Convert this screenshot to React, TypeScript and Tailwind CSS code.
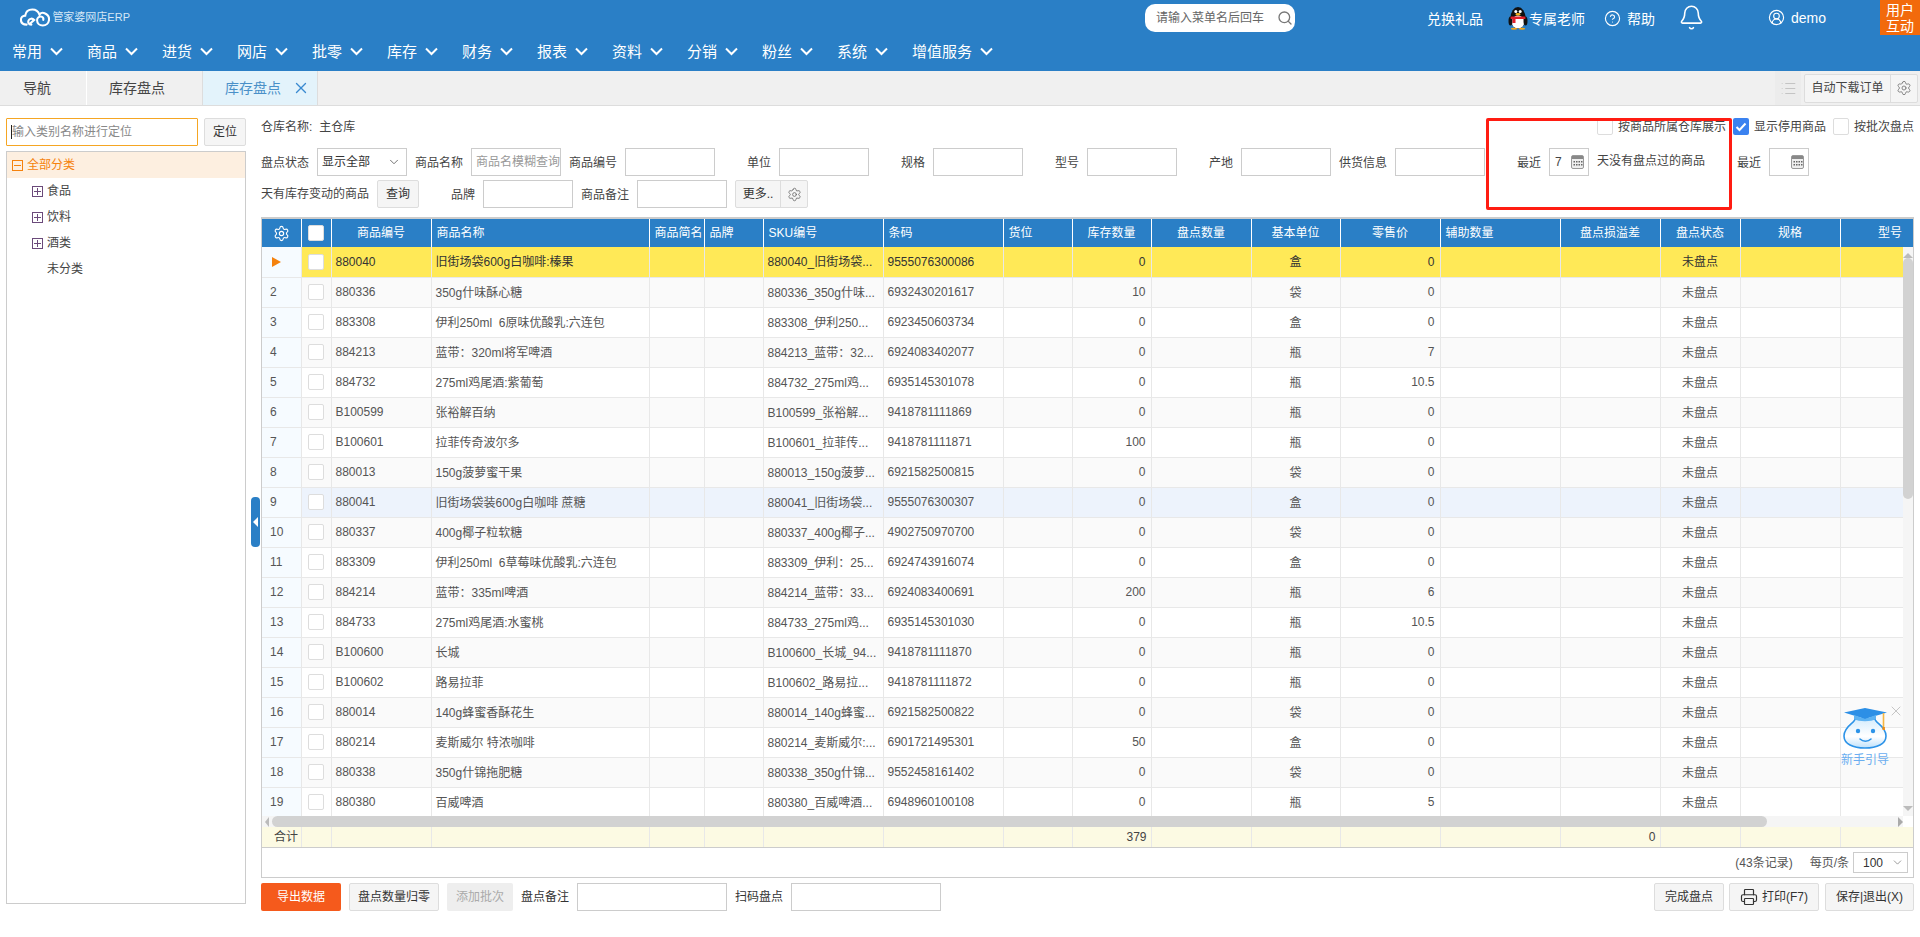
import { Bell, ChevronDown, CircleHelp, CircleUserRound, List, Printer, Search, Settings, X } from 'lucide-react';

const menus = ['常用', '商品', '进货', '网店', '批零', '库存', '财务', '报表', '资料', '分销', '粉丝', '系统', '增值服务'];

// column widths, same for header, body and footer
const widths = [39, 30, 100, 218, 55, 59, 120, 120, 69, 79, 100, 89, 100, 120, 100, 80, 100, 100];

const headers: { label: string; left?: boolean }[] = [
  { label: '商品编号' },
  { label: '商品名称', left: true },
  { label: '商品简名', left: true },
  { label: '品牌', left: true },
  { label: 'SKU编号', left: true },
  { label: '条码', left: true },
  { label: '货位', left: true },
  { label: '库存数量' },
  { label: '盘点数量' },
  { label: '基本单位' },
  { label: '零售价' },
  { label: '辅助数量', left: true },
  { label: '盘点损溢差' },
  { label: '盘点状态' },
  { label: '规格' },
  { label: '型号' },
];

type Row = [string, string, string, string, string, string, string];

const rows: Row[] = [
  ['880040', '旧街场袋600g白咖啡:榛果', '880040_旧街场袋...', '9555076300086', '0', '盒', '0'],
  ['880336', '350g什味酥心糖', '880336_350g什味...', '6932430201617', '10', '袋', '0'],
  ['883308', '伊利250ml  6原味优酸乳:六连包', '883308_伊利250...', '6923450603734', '0', '盒', '0'],
  ['884213', '蓝带：320ml将军啤酒', '884213_蓝带：32...', '6924083402077', '0', '瓶', '7'],
  ['884732', '275ml鸡尾酒:紫葡萄', '884732_275ml鸡...', '6935145301078', '0', '瓶', '10.5'],
  ['B100599', '张裕解百纳', 'B100599_张裕解...', '9418781111869', '0', '瓶', '0'],
  ['B100601', '拉菲传奇波尔多', 'B100601_拉菲传...', '9418781111871', '100', '瓶', '0'],
  ['880013', '150g菠萝蜜干果', '880013_150g菠萝...', '6921582500815', '0', '袋', '0'],
  ['880041', '旧街场袋装600g白咖啡 蔗糖', '880041_旧街场袋...', '9555076300307', '0', '盒', '0'],
  ['880337', '400g椰子粒软糖', '880337_400g椰子...', '4902750970700', '0', '袋', '0'],
  ['883309', '伊利250ml  6草莓味优酸乳:六连包', '883309_伊利：25...', '6924743916074', '0', '盒', '0'],
  ['884214', '蓝带：335ml啤酒', '884214_蓝带：33...', '6924083400691', '200', '瓶', '6'],
  ['884733', '275ml鸡尾酒:水蜜桃', '884733_275ml鸡...', '6935145301030', '0', '瓶', '10.5'],
  ['B100600', '长城', 'B100600_长城_94...', '9418781111870', '0', '瓶', '0'],
  ['B100602', '路易拉菲', 'B100602_路易拉...', '9418781111872', '0', '瓶', '0'],
  ['880014', '140g蜂蜜香酥花生', '880014_140g蜂蜜...', '6921582500822', '0', '袋', '0'],
  ['880214', '麦斯威尔 特浓咖啡', '880214_麦斯威尔:...', '6901721495301', '50', '盒', '0'],
  ['880338', '350g什锦拖肥糖', '880338_350g什锦...', '9552458161402', '0', '袋', '0'],
  ['880380', '百威啤酒', '880380_百威啤酒...', '6948960100108', '0', '瓶', '5'],
];

const Cols = () => (
  <colgroup>
    {widths.map((w, i) => (
      <col key={i} style={{ width: w }} />
    ))}
  </colgroup>
);

const Chevron = () => (
  <svg width="13" height="9" viewBox="0 0 13 9" fill="none" stroke="white" strokeWidth="2" className="ml-2 shrink-0">
    <polyline points="1,1.5 6.5,7 12,1.5" />
  </svg>
);

const CloudLogo = () => (
  <svg width="32" height="19" viewBox="0 0 32 19" fill="none" stroke="white" strokeWidth="2.2" strokeLinecap="round">
    <path d="M7 17 C2.5 17 1 14.5 1 12 C1 9.5 3 7.5 5.5 7.5 C6 3.5 9 1 13 1 C17 1 19.5 3.5 20.5 6.5 C22 4.5 24 4 26 5 C29.5 6.5 31 9.5 30.5 12.5 C30 15.5 27.5 18 24 18 C20.5 18 18 15.5 18 12.5 C18 10 20 8.5 22 8.5 C24 8.5 25 10.5 24.5 12" />
    <path d="M12 17 C9 17 8 14.5 9 12.5 C10 10.5 13 10 15 12 L11 15.5" />
  </svg>
);

const Penguin = () => (
  <svg width="20" height="24" viewBox="0 0 20 24">
    <ellipse cx="10" cy="12" rx="7.5" ry="11" fill="#111" />
    <ellipse cx="10" cy="16" rx="6.5" ry="6.5" fill="#fff" />
    <ellipse cx="2.5" cy="15" rx="2" ry="4.5" fill="#111" />
    <ellipse cx="17.5" cy="15" rx="2" ry="4.5" fill="#111" />
    <rect x="2.5" y="10.5" width="15" height="2.6" rx="1.2" fill="#e0202a" />
    <rect x="4.5" y="12" width="3" height="5" fill="#e0202a" />
    <circle cx="7.8" cy="5.6" r="1.5" fill="#fff" />
    <circle cx="12.2" cy="5.6" r="1.5" fill="#fff" />
    <ellipse cx="10" cy="8.3" rx="2.6" ry="1.2" fill="#f6b21a" />
    <ellipse cx="6" cy="22.8" rx="3.2" ry="1" fill="#f6a81a" />
    <ellipse cx="14" cy="22.8" rx="3.2" ry="1" fill="#f6a81a" />
  </svg>
);

const CalendarIcon = () => (
  <svg width="13" height="14" viewBox="0 0 13 14">
    <rect x="0.5" y="0.5" width="12" height="13" rx="1.5" fill="#eee" stroke="#999" />
    <rect x="1" y="1" width="11" height="3" fill="#888" />
    <g fill="#666">
      <rect x="2.5" y="6" width="1.5" height="1.5" />
      <rect x="5" y="6" width="1.5" height="1.5" />
      <rect x="7.5" y="6" width="1.5" height="1.5" />
      <rect x="10" y="6" width="1.5" height="1.5" />
      <rect x="2.5" y="9" width="1.5" height="1.5" />
      <rect x="5" y="9" width="1.5" height="1.5" />
      <rect x="7.5" y="9" width="1.5" height="1.5" />
      <rect x="10" y="9" width="1.5" height="1.5" />
    </g>
  </svg>
);

const GuideFace = () => (
  <svg width="48" height="44" viewBox="0 0 48 44">
    <defs>
      <linearGradient id="faceFill" x1="0" y1="0" x2="0" y2="1">
        <stop offset="0" stopColor="#d6edfd" />
        <stop offset="0.6" stopColor="#ffffff" />
        <stop offset="1" stopColor="#bfe2fb" />
      </linearGradient>
    </defs>
    <path d="M14 13 C14 17 3 20 3 30 C3 38 12 42 24 42 C36 42 45 38 45 30 C45 20 34 17 34 13 Z" fill="url(#faceFill)" stroke="#2c93e8" strokeWidth="1.6" />
    <path d="M3 6.5 L24 2 L46 6.5 L24 13 Z" fill="#2c8fe6" />
    <path d="M13 9 L13 13 C18 16 30 16 35 13 L35 9 L24 13 Z" fill="#5db2f2" />
    <path d="M42.5 7 L42.5 22" stroke="#f5b642" strokeWidth="1.6" />
    <rect x="41.5" y="21" width="2.4" height="3" fill="#f08c14" />
    <circle cx="17" cy="25" r="2.2" fill="#2c93e8" />
    <circle cx="32" cy="25" r="2.2" fill="#2c93e8" />
    <path d="M19 33 C22 36 27 36 30 33" fill="none" stroke="#2c93e8" strokeWidth="1.6" strokeLinecap="round" />
  </svg>
);

const Check = ({ checked }: { checked?: boolean }) =>
  checked ? (
    <span className="flex h-[17px] w-4 items-center justify-center rounded-[2px] bg-[#3b82f0]">
      <svg width="12" height="10" viewBox="0 0 12 10" fill="none" stroke="white" strokeWidth="2">
        <polyline points="1.5,5 4.5,8 10.5,1.5" />
      </svg>
    </span>
  ) : (
    <span className="block h-[17px] w-4 rounded-[2px] border border-[#ddd] bg-white" />
  );

const Box = () => <span className="mx-auto block h-[16px] w-4 rounded-[2px] border border-[#ddd] bg-white" />;

const TextInput = ({ w, placeholder }: { w: string; placeholder?: string }) => (
  <input
    placeholder={placeholder}
    className={`h-7 ${w} border border-[#ccc] bg-white pl-1 text-xs text-[#333] outline-none placeholder:text-[#999]`}
  />
);

const Field = ({ label, placeholder }: { label: string; placeholder?: string }) => (
  <div className="mr-2 flex items-center">
    <span className="mr-2 w-12 pt-[2px] text-right whitespace-nowrap">{label}</span>
    <TextInput w="w-[90px]" placeholder={placeholder} />
  </div>
);

const DaysInput = ({ value }: { value?: string }) => (
  <div className="flex h-7 w-10 items-center justify-between border border-[#ccc] pr-[4px] pl-[5px]">
    <span>{value}</span>
    <CalendarIcon />
  </div>
);

const TreeRow = ({ label }: { label: string }) => (
  <div className="flex h-[26px] items-center pl-[25px] text-[#444]">
    <span className="mr-[4px] flex h-[11px] w-[11px] items-center justify-center border border-[#6b4a7a]">
      <span className="relative block h-[1px] w-[7px] bg-[#6b4a7a]">
        <span className="absolute top-[-3px] left-[3px] block h-[7px] w-[1px] bg-[#6b4a7a]" />
      </span>
    </span>
    {label}
  </div>
);

const Btn = ({ children, w, className = '' }: { children: React.ReactNode; w: string; className?: string }) => (
  <button className={`flex h-7 ${w} items-center justify-center rounded-[2px] border border-[#ddd] bg-[#f5f5f5] text-xs text-[#333] ${className}`}>
    {children}
  </button>
);

export default function App() {
  return (
    <div className="flex h-[937px] w-[1920px] flex-col overflow-hidden bg-white font-['Liberation_Sans','Noto_Sans_CJK_SC',sans-serif] text-xs text-[#444]">
      {/* top bar */}
      <header className="h-[71px] shrink-0 bg-[#2a7fc6] text-white">
        <div className="flex h-[37px] items-start">
          <div className="mt-[8px] ml-[20px] flex w-[110px] shrink-0 items-center">
            <CloudLogo />
            <span className="ml-[2px] text-[11px] whitespace-nowrap text-[#d5e7f6]">管家婆网店ERP</span>
          </div>
          <div className="mt-[4px] ml-[1015px] flex h-7 w-[150px] shrink-0 items-center justify-between rounded-[10px] bg-white pr-[2px] pl-[11px] text-[#666]">
            请输入菜单名后回车
            <Search size={16} className="text-[#777]" />
          </div>
          <div className="ml-[132px] flex h-[35px] shrink-0 items-center text-sm whitespace-nowrap">
            <span className="mt-[3px]">兑换礼品</span>
            <span className="ml-[25px]">
              <Penguin />
            </span>
            <span className="mt-[3px] ml-[1px]">专属老师</span>
            <CircleHelp size={17} strokeWidth={1.6} className="mt-[2px] ml-[19px] shrink-0" />
            <span className="mt-[3px] ml-[6px]">帮助</span>
            <Bell size={27} strokeWidth={1.4} className="ml-[23px] shrink-0" />
            <CircleUserRound size={17} strokeWidth={1.6} className="ml-[63px] shrink-0" />
            <span className="ml-[6px]">demo</span>
          </div>
          <div className="ml-auto flex h-[35px] w-10 shrink-0 items-center justify-center bg-[#f26a0c] text-center text-sm leading-[16px] text-white">
            用户
            <br />
            互动
          </div>
        </div>
        <nav className="flex h-[30px] items-center pl-3 text-[15px]">
          {menus.map((m) => (
            <div key={m} className={`flex shrink-0 items-center whitespace-nowrap ${m === '增值服务' ? '' : 'w-[75px]'}`}>
              {m}
              <Chevron />
            </div>
          ))}
        </nav>
      </header>

      {/* tabs */}
      <div className="flex h-[35px] shrink-0 border-b border-[#ddd] bg-[#f0f0f0] text-sm">
        <div className="flex w-[87px] items-center border-r border-[#fff] pl-[23px]">导航</div>
        <div className="flex w-[116px] items-center border-r border-[#ddd] pl-[22px]">库存盘点</div>
        <div className="flex w-[115px] items-center border-r border-[#ddd] bg-[#e3f3fb] pl-[22px] text-[#4a90c8]">
          库存盘点
          <X size={18} strokeWidth={1.8} className="ml-[11px] text-[#3a8ad0]" />
        </div>
        <div className="ml-auto flex items-center">
          <div className="flex h-[34px] w-[26px] items-center justify-center bg-[#ececec] text-[#c4c4c4]">
            <List size={17} strokeWidth={1.5} />
          </div>
          <div className="mr-[2px] ml-[3px] flex h-[29px] items-center rounded-[2px] border border-[#ddd] bg-[#f5f5f5] text-xs">
            <span className="flex h-full w-[86px] items-center justify-center border-r border-[#ddd]">自动下载订单</span>
            <span className="flex w-[26px] justify-center text-[#777]">
              <Settings size={16} strokeWidth={1.3} />
            </span>
          </div>
        </div>
      </div>

      <main className="relative flex min-h-0 flex-1">
        {/* category tree */}
        <aside className="relative w-[261px] shrink-0 pt-3 pl-[6px]">
          <div className="flex h-7 w-[240px] justify-between">
            <div className="relative h-7 w-[192px]">
              <input
                placeholder="输入类别名称进行定位"
                className="h-7 w-full rounded-[1px] border border-[#f5a623] pl-[5px] text-xs outline-none placeholder:text-[#888]"
              />
              <span className="absolute top-[7px] left-[5px] h-[14px] w-[1px] bg-[#222]" />
            </div>
            <Btn w="w-[42px]">定位</Btn>
          </div>
          <div className="mt-[5px] h-[753px] w-[240px] border border-[#ccc] bg-white">
            <div className="flex h-[26px] items-center bg-[#fdefe0] pl-[5px] text-[#f5820d]">
              <span className="mr-[4px] flex h-[11px] w-[11px] items-center justify-center border border-[#f5820d]">
                <span className="block h-[1px] w-[7px] bg-[#f5820d]" />
              </span>
              全部分类
            </div>
            <TreeRow label="食品" />
            <TreeRow label="饮料" />
            <TreeRow label="酒类" />
            <div className="flex h-[26px] items-center pl-[40px] text-[#444]">未分类</div>
          </div>
          <button className="absolute top-[391px] left-[251px] flex h-[50px] w-[9px] items-center justify-center rounded-[4px] bg-[#2a7fc6]">
            <span className="block h-0 w-0 border-y-[5px] border-r-[5px] border-y-transparent border-r-white" />
          </button>
        </aside>

        {/* content */}
        <section className="relative w-[1653px] shrink-0 pt-3">
          <div className="flex h-[30px] items-start justify-between">
            <div className="flex h-[17px] items-center">
              <span>仓库名称:</span>
              <span className="ml-[7px]">主仓库</span>
            </div>
            <div className="flex items-center">
              <Check />
              <span className="mr-[7px] ml-[5px]">按商品所属仓库展示</span>
              <Check checked />
              <span className="mr-[7px] ml-[5px]">显示停用商品</span>
              <Check />
              <span className="ml-[5px]">按批次盘点</span>
            </div>
          </div>

          <div className="flex h-7 items-center whitespace-nowrap">
            <span className="mr-2 w-12 pt-[2px]">盘点状态</span>
            <div className="mr-2 flex h-7 w-[90px] items-center justify-between border border-[#ccc] pr-[5px] pl-[4px] text-[#333]">
              显示全部
              <ChevronDown size={14} strokeWidth={1.4} className="text-[#555]" />
            </div>
            <Field label="商品名称" placeholder="商品名模糊查询" />
            <Field label="商品编号" />
            <Field label="单位" />
            <Field label="规格" />
            <Field label="型号" />
            <Field label="产地" />
            <Field label="供货信息" />
            <span className="mr-2 w-12 pt-[2px] text-right">最近</span>
            <DaysInput value="7" />
            <span className="mx-2 mb-[2px] w-[108px]">天没有盘点过的商品</span>
            <span className="mr-2 w-12 pt-[2px] text-right">最近</span>
            <DaysInput />
          </div>

          <div className="mt-1 flex h-7 items-center whitespace-nowrap">
            <span className="mr-2 w-[108px]">天有库存变动的商品</span>
            <Btn w="w-[42px]" className="mr-2">
              查询
            </Btn>
            <Field label="品牌" />
            <Field label="商品备注" />
            <div className="flex h-7 items-center rounded-[2px] border border-[#ddd] bg-[#f5f5f5] text-[#333]">
              <span className="flex h-full w-[45px] items-center justify-center border-r border-[#ddd]">更多..</span>
              <span className="flex w-[26px] justify-center text-[#666]">
                <Settings size={15} strokeWidth={1.3} />
              </span>
            </div>
          </div>

          {/* red annotation */}
          <div className="absolute top-3 left-[1225px] h-[92px] w-[246px] rounded-[2px] border-[3px] border-[#ff1c12]" />

          {/* grid */}
          <div className="mt-[9px] h-[661px] w-[1653px] border-x border-t-2 border-b border-[#ccc]">
            <div className="overflow-hidden">
              <table className="w-[1678px] table-fixed border-collapse text-white">
                <Cols />
                <thead>
                  <tr className="h-7 bg-[#2a7fc6]">
                    <th className="border-r border-white font-normal">
                      <Settings size={17} strokeWidth={1.6} className="mx-auto" />
                    </th>
                    <th className="border-r border-white font-normal">
                      <Box />
                    </th>
                    {headers.map((h) => (
                      <th
                        key={h.label}
                        className={`border-r border-white font-normal whitespace-nowrap ${h.left ? 'pl-[5px] text-left' : 'text-center'}`}
                      >
                        {h.label}
                      </th>
                    ))}
                  </tr>
                </thead>
              </table>
            </div>

            <div className="flex h-[580px]">
              <div className="w-[1641px] shrink-0">
                <div className="h-[569px] overflow-hidden">
                  <table className="w-[1678px] table-fixed border-collapse text-[#555]">
                    <Cols />
                    <tbody>
                      {rows.map((r, i) => {
                        const bg = i === 0 ? 'bg-[#ffe957] text-[#333]' : i === 8 ? 'bg-[#edf3fc]' : i % 2 === 1 ? 'bg-[#fafafa]' : 'bg-white';
                        return (
                          <tr key={r[0]} className={`h-[30px] ${bg}`}>
                            <td className="border-r border-b border-[#e8e8e8] bg-[#f6fbff] pl-[8px]">
                              {i === 0 ? (
                                <span className="ml-[2px] block h-0 w-0 border-y-[5px] border-l-[9px] border-y-transparent border-l-[#f5820d]" />
                              ) : (
                                i + 1
                              )}
                            </td>
                            <td className="border-r border-b border-[#e8e8e8]">
                              <Box />
                            </td>
                            <td className="border-r border-b border-[#e8e8e8] pl-1 whitespace-nowrap">{r[0]}</td>
                            <td className="border-r border-b border-[#e8e8e8] pt-[1px] pl-1 whitespace-pre">{r[1]}</td>
                            <td className="border-r border-b border-[#e8e8e8]" />
                            <td className="border-r border-b border-[#e8e8e8]" />
                            <td className="overflow-hidden border-r border-b border-[#e8e8e8] pt-[1px] pl-1 whitespace-nowrap">{r[2]}</td>
                            <td className="border-r border-b border-[#e8e8e8] pl-1">{r[3]}</td>
                            <td className="border-r border-b border-[#e8e8e8]" />
                            <td className="border-r border-b border-[#e8e8e8] pr-[5px] text-right">{r[4]}</td>
                            <td className="border-r border-b border-[#e8e8e8]" />
                            <td className="border-r border-b border-[#e8e8e8] pt-[1px] text-center">{r[5]}</td>
                            <td className="border-r border-b border-[#e8e8e8] pr-[5px] text-right">{r[6]}</td>
                            <td className="border-r border-b border-[#e8e8e8]" />
                            <td className="border-r border-b border-[#e8e8e8]" />
                            <td className="border-r border-b border-[#e8e8e8] pt-[1px] text-center">未盘点</td>
                            <td className="border-r border-b border-[#e8e8e8]" />
                            <td className="border-r border-b border-[#e8e8e8]" />
                          </tr>
                        );
                      })}
                    </tbody>
                  </table>
                </div>
                {/* horizontal scrollbar */}
                <div className="flex h-[11px] items-center bg-[#f5f5f5]">
                  <span className="ml-[3px] h-0 w-0 border-y-[5px] border-r-[4px] border-y-transparent border-r-[#bbb]" />
                  <span className="ml-[3px] h-[11px] w-[1495px] rounded-[6px] bg-[#d2d2d2]" />
                  <span className="ml-auto h-0 w-0 border-y-[5px] border-l-[5px] border-y-transparent border-l-[#aaa]" />
                </div>
              </div>
              {/* vertical scrollbar */}
              <div className="flex h-[569px] w-[10px] flex-col items-center bg-[#f5f5f5] pt-[6px]">
                <span className="h-0 w-0 border-x-[5px] border-b-[5px] border-x-transparent border-b-[#bbb]" />
                <span className="h-[241px] w-[10px] rounded-[5px] bg-[#d2d2d2]" />
                <span className="mt-auto mb-[5px] h-0 w-0 border-x-[5px] border-t-[5px] border-x-transparent border-t-[#bbb]" />
              </div>
            </div>

            {/* totals */}
            <div className="h-[21px] overflow-hidden border-b border-[#ccc]">
              <table className="w-[1678px] table-fixed border-collapse text-[#444]">
                <Cols />
                <tbody>
                  <tr className="h-5 bg-[#fcfae3]">
                    {widths.map((_, i) => (
                      <td
                        key={i}
                        className={`border-r border-[#e8e8e8] whitespace-nowrap ${i === 9 || i === 14 ? 'pr-[4px] text-right' : ''} ${i === 0 ? 'pl-3' : ''}`}
                      >
                        {i === 0 ? '合计' : i === 9 ? '379' : i === 14 ? '0' : ''}
                      </td>
                    ))}
                  </tr>
                </tbody>
              </table>
            </div>

            {/* pager */}
            <div className="flex h-[29px] items-center justify-end pr-[5px] text-[#555]">
              <span>(43条记录)</span>
              <span className="ml-[17px]">每页/条</span>
              <div className="ml-[4px] flex h-[21px] w-[55px] items-center justify-between border border-[#ccc] pr-[3px] pl-[9px] text-[#333]">
                100
                <ChevronDown size={13} strokeWidth={1.2} className="text-[#666]" />
              </div>
            </div>
          </div>

          {/* bottom actions */}
          <div className="mt-[5px] flex items-center whitespace-nowrap">
            <button className="flex h-7 w-[80px] items-center justify-center rounded-[2px] bg-[#f55a1c] text-white">导出数据</button>
            <Btn w="w-[90px]" className="ml-2">
              盘点数量归零
            </Btn>
            <button className="ml-2 flex h-7 w-[66px] items-center justify-center rounded-[2px] bg-[#eeeeee] text-[#aaa]">添加批次</button>
            <span className="ml-2 w-12 text-[#333]">盘点备注</span>
            <TextInput w="ml-2 w-[150px]" />
            <span className="ml-2 w-12 text-[#333]">扫码盘点</span>
            <TextInput w="ml-2 w-[150px]" />
            <Btn w="ml-auto w-[70px]">完成盘点</Btn>
            <Btn w="ml-[5px] w-[90px]">
              <Printer size={18} strokeWidth={1.6} className="mr-[4px]" />
              打印(F7)
            </Btn>
            <Btn w="ml-[6px] w-[89px]">保存|退出(X)</Btn>
          </div>

          {/* help widget */}
          <div className="absolute top-[600px] left-[1580px] flex w-[48px] flex-col items-center text-[#6aaef0]">
            <GuideFace />
            <span className="mt-[2px] whitespace-nowrap">新手引导</span>
          </div>
          <X size={16} strokeWidth={1} className="absolute top-[597px] left-[1627px] text-[#aaa]" />
        </section>
      </main>
    </div>
  );
}
